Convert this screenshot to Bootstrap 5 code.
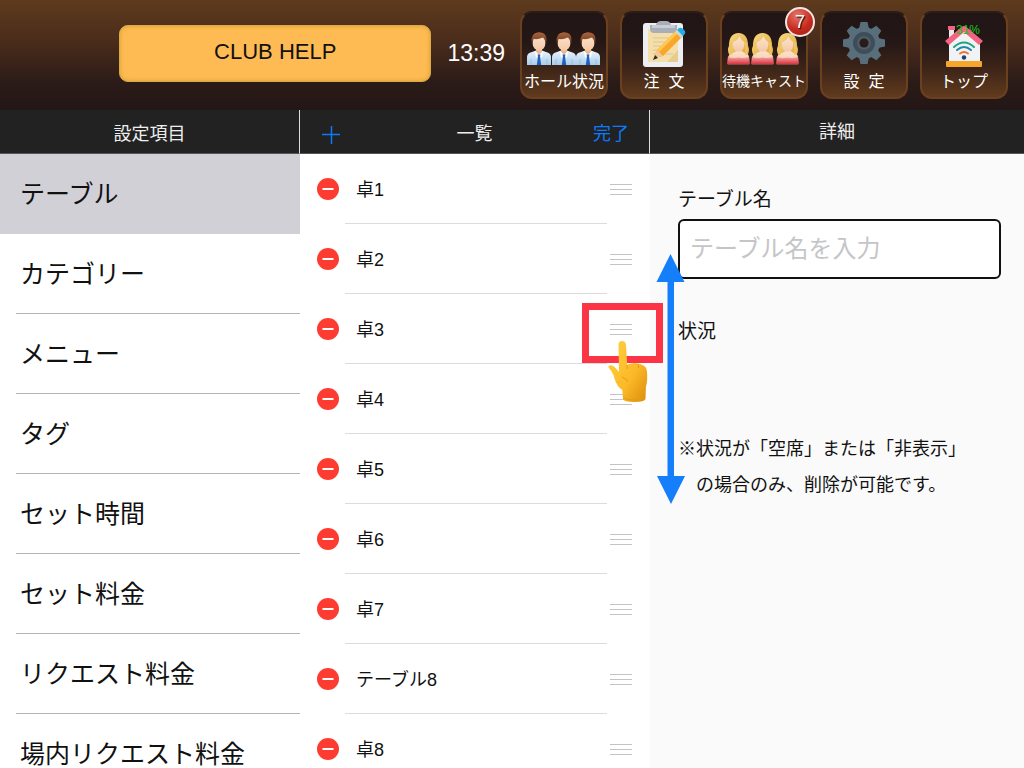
<!DOCTYPE html>
<html lang="ja">
<head>
<meta charset="utf-8">
<meta name="viewport" content="width=device-width, initial-scale=1">
<title>CLUB HELP</title>
<link rel="stylesheet" href="https://cdn.jsdelivr.net/npm/bootstrap@5.3.0/dist/css/bootstrap.min.css">
<style>
  body { font-family: "Liberation Sans", "Noto Sans CJK JP", sans-serif; color: #111; background: #fff; }
  .topbar { height: 110px; padding: 0 16px 0 119px; gap: 15px; background: linear-gradient(#5f3b1d 0%, #4a2c1b 38%, #2b1b18 75%, #231616 100%); }
  .topbar-main { gap: 16px; padding-bottom: 4px; }
  .club-btn { height: 57px; padding: 0 0 4px; font-size: 22px; background: #febb54; border: 1px solid #d9ab4c; border-radius: 9px; color: #111; box-shadow: inset 0 0 4px #d99f25; }
  .club-btn:hover { background: #ffc56b; }
  .clock { font-size: 23px; color: #fff; }
  .tiles { gap: 12px; }
  .tile { width: 88px; height: 88px; padding: 7px 0 0; border: 2px solid #6a401f; border-radius: 12px; background: linear-gradient(#211515 0%, #241716 35%, #3c2418 65%, #603a1d 100%); color: #fff; font-size: 16px; line-height: 24px; white-space: pre; border-top-color: #2e1c17; }
  .tile svg { display: block; height: 50px; }
  .tile-narrow { font-size: 14px; line-height: 22px; }
  .count-badge { top: -6px; right: -9px; width: 30px; height: 30px; border: 2px solid #f4e8e6; border-radius: 50%; background: radial-gradient(circle at 40% 25%, #e9776a, #c62b20 55%, #a41b13); font-size: 18px; line-height: 26px; text-shadow: 1px 1px 1px #000; }
  .battery { top: 11px; left: 0; width: 100%; padding-left: 8px; font-size: 12px; line-height: 12px; color: #17c51d; }
  .workspace { display: grid; grid-template-columns: 300fr 350fr 374fr; min-height: 0; }
  .pane { min-width: 0; min-height: 0; }
  .pane-head { height: 44px; flex: none; background: #222; color: #eee; font-size: 18px; line-height: 24px; border-bottom: 1px solid #555; }
  .pane-head-split { padding-top: 4px; border-right: 1px solid #ddd; }
  .list-head { display: grid; grid-template-columns: 1fr auto 1fr; }
  .pane-head h2 { font-size: 18px; line-height: 24px; font-weight: 400; margin: 0; }
  .plain-btn { border: 0; padding: 0; background: none; color: #0a7aff; line-height: 24px; }
  .scroller { overflow-y: auto; scrollbar-width: none; }
  .menu-item { display: block; flex: none; height: 80px; padding-left: 16px; color: #111; text-decoration: none; font-size: 25px; }
  .menu-item span { display: flex; align-items: center; height: 80px; padding: 2px 0 0 4px; border-bottom: 1px solid #b4b4b6; }
  .menu-item.current { background: #d1d0d7; }
  .menu-item.current span { border-color: transparent; }
  .table-row { height: 70px; flex: none; padding: 0 18px 0 17px; font-size: 18px; }
  .row-name { height: 70px; margin: 0 3px 0 6px; padding: 3px 0 0 11px; border-bottom: 1px solid #dcdcde; }
  .detail { background: #fafafa; }
  .detail-form { padding: 31px 23px 0 28px; }
  .field-label { display: block; font-size: 19px; line-height: 30px; margin: 0; }
  .name-input { height: 60px; margin: 4px 0 38px; padding: 0 10px; border: 2px solid #111; border-radius: 6px; font-size: 24px; background: #fff; }
  .name-input::placeholder { color: #c5c5c8; opacity: 1; }
  .note { margin: 84px 0 0; padding-left: 18px; text-indent: -18px; font-size: 18px; line-height: 36px; white-space: nowrap; }
  .note-rest { display: block; text-indent: 0; }
  .gesture { left: -70px; top: 140px; pointer-events: none; }
</style>
</head>
<body>
<svg width="0" height="0" class="position-absolute" aria-hidden="true">
  <defs>
    <linearGradient id="shirt" x1="0" y1="0" x2="0" y2="1"><stop offset="0" stop-color="#e9f5fc"/><stop offset="1" stop-color="#a9cdea"/></linearGradient>
    <linearGradient id="dress" x1="0" y1="0" x2="0" y2="1"><stop offset="0" stop-color="#f7a8a5"/><stop offset="1" stop-color="#d4323f"/></linearGradient>
    <linearGradient id="blonde" x1="0" y1="0" x2="1" y2="1"><stop offset="0" stop-color="#f8dc84"/><stop offset="1" stop-color="#dda63c"/></linearGradient>
    <linearGradient id="brown" x1="0" y1="0" x2="0" y2="1"><stop offset="0" stop-color="#a9643b"/><stop offset="1" stop-color="#6f3b21"/></linearGradient>
    <linearGradient id="skin" x1="0" y1="0" x2="0" y2="1"><stop offset="0" stop-color="#fce3cf"/><stop offset="1" stop-color="#f5c8a6"/></linearGradient>
    <linearGradient id="hand" x1="0" y1="0" x2="1" y2="1"><stop offset="0" stop-color="#ffd23e"/><stop offset=".6" stop-color="#fcb827"/><stop offset="1" stop-color="#d98c0b"/></linearGradient>
    <symbol id="staff" viewBox="0 0 24 33">
      <path d="M0 33v-8q0-4 5-5l4-1.500h6l4 1.500q5 1 5 5v8z" fill="url(#shirt)"/>
      <path d="M9 15h6v5l-3 3-3-3z" fill="#edb98f"/>
      <path d="M8 19l4 4-3 3zM16 19l-4 4 3 3z" fill="#fff"/>
      <path d="M10.500 22.500h3l-.5 2 1.200 8.500h-4.400l1.200-8.500z" fill="#2160bd"/>
      <path d="M4 27v6M20 27v6" stroke="#8fb5d6" stroke-width=".7"/>
      <ellipse cx="12" cy="10.500" rx="6.500" ry="8.300" fill="url(#skin)"/>
      <path d="M4.800 11Q3 1 11.500.2 21 0 19.200 11l-1-.2q-.3-4-2.200-5.400Q10 8 6.600 6.800q-.7 2-.6 4.200z" fill="url(#brown)"/>
    </symbol>
    <symbol id="hostess" viewBox="0 0 24 33">
      <path d="M3 24Q-.5 19 2 14 2 .5 12 .3 22 .5 22 14 24.500 19 21 24z" fill="url(#blonde)"/>
      <path d="M1 33v-7q1-4 6-5l3-2h5l3 2q5 1 5 5v7z" fill="url(#skin)"/>
      <path d="M0 33l1-8q5 2 11 1 6 1 11-1l1 8z" fill="url(#dress)"/>
      <path d="M5.800 10q5-1 7-6 2 4 5.300 6 .3 10-6.100 10T5.800 10z" fill="url(#skin)"/>
      <path d="M4.600 10q-2 7-.5 13M19.300 10q2 7 .5 13" fill="none" stroke="#efc564" stroke-width="2.400"/>
    </symbol>
  </defs>
</svg>

<div class="vh-100 d-flex flex-column overflow-hidden">
  <header class="topbar d-flex align-items-center flex-shrink-0">
    <div class="topbar-main d-flex align-items-center flex-fill">
      <button type="button" class="club-btn btn flex-fill">CLUB HELP</button>
      <time class="clock">13:39</time>
    </div>
    <nav class="tiles d-flex">
      <button type="button" class="tile d-flex flex-column align-items-center"><svg width="76" viewBox="0 0 76 50" aria-hidden="true"><use href="#staff" x="1" y="12" width="24" height="33"/><use href="#staff" x="26" y="12" width="24" height="33"/><use href="#staff" x="50" y="12" width="24" height="33"/></svg><span>ホール状況</span></button>
      <button type="button" class="tile d-flex flex-column align-items-center"><svg width="44" viewBox="0 0 44 50" aria-hidden="true">
          <rect x="1" y="3" width="40" height="44" rx="3" fill="#eceef1"/>
          <path d="M6 9h30v33H6z" fill="#f4dfaa"/><path d="M25 42l11-12v12z" fill="#e8cc8c"/>
          <path d="M11 18h17M11 22h15M11 26h12M11 30h9M11 34h7M23 34h8" stroke="#dbc795"/>
          <path d="M8 5h6q1-4 5-4h5q4 0 5 4h6v4q0 4-4 4H12q-4 0-4-4z" fill="#a9afb9"/><path d="M10 5h23v3H10z" fill="#c9ced6"/>
          <path d="M12 38l3-8 20-20 6 6-20 20z" fill="#f8a72b"/><path d="M15 30l20-20 2 2-20 20z" fill="#ffc84e"/>
          <path d="M12 38l3-8 6 6z" fill="#f1c9a0"/><path d="M11 40l2-5 3 3z" fill="#35292b"/>
          <path d="M35 10l2-2q2-1 4 1l2 2q1 2-1 4l-2 2z" fill="#22aee5"/><path d="M33 12l2-2 6 6-2 2z" fill="#cbd7dc"/>
        </svg><span>注  文</span></button>
      <button type="button" class="tile tile-narrow d-flex flex-column align-items-center position-relative"><svg width="76" viewBox="0 0 76 50" aria-hidden="true"><use href="#hostess" x="1" y="12" width="23" height="33"/><use href="#hostess" x="25" y="12" width="23" height="33"/><use href="#hostess" x="50" y="12" width="23" height="33"/></svg><span>待機キャスト</span><span class="count-badge position-absolute">7</span></button>
      <button type="button" class="tile d-flex flex-column align-items-center"><svg width="44" viewBox="-22 -23 44 50" aria-hidden="true">
          <g fill="#586e7b"><circle r="16"/>
            <path id="tooth" d="M-5-14l1.500-7h7L5-14zM-5 14l1.500 7h7L5 14z"/>
            <use href="#tooth" transform="rotate(45)"/><use href="#tooth" transform="rotate(90)"/><use href="#tooth" transform="rotate(135)"/></g>
          <circle r="11" fill="#3e4d57"/><circle r="7" fill="#4b5d68"/><circle r="4.500" fill="#2a1a18"/>
        </svg><span>設  定</span></button>
      <button type="button" class="tile d-flex flex-column align-items-center position-relative"><svg width="40" viewBox="0 0 40 50" aria-hidden="true">
          <path d="M5 8h5v14H5z" fill="#e7e9ec"/><path d="M4 6h7v4H4z" fill="#f2647f"/>
          <path d="M20 9L5 22v22h31V22z" fill="#f1f2f5"/>
          <path d="M17.500 7q2.500-2 5 0L39 21l-4 4-15-13L5 25l-4-4z" fill="#f2647f"/>
          <rect x="2" y="41" width="36" height="6" rx="1" fill="#f7a62b"/>
          <g fill="none" stroke-width="2" stroke-linecap="round"><path d="M10 27q10-9 20 0" stroke="#1ba67e"/><path d="M13 30q7-6 14 0" stroke="#2187a8"/><path d="M16 33.500q4-3 8 0" stroke="#f26f30"/></g>
          <circle cx="20" cy="37.500" r="2.200" fill="#17456f"/>
        </svg><span>トップ</span><span class="battery position-absolute">31%</span></button>
    </nav>
  </header>

  <main class="workspace flex-grow-1">
    <section class="pane d-flex flex-column">
      <div class="pane-head pane-head-split d-flex align-items-center justify-content-center"><h2>設定項目</h2></div>
      <nav class="scroller d-flex flex-column">
        <a href="#" class="menu-item current" aria-current="page"><span>テーブル</span></a>
        <a href="#" class="menu-item"><span>カテゴリー</span></a>
        <a href="#" class="menu-item"><span>メニュー</span></a>
        <a href="#" class="menu-item"><span>タグ</span></a>
        <a href="#" class="menu-item"><span>セット時間</span></a>
        <a href="#" class="menu-item"><span>セット料金</span></a>
        <a href="#" class="menu-item"><span>リクエスト料金</span></a>
        <a href="#" class="menu-item"><span>場内リクエスト料金</span></a>
      </nav>
    </section>

    <section class="pane d-flex flex-column">
      <div class="pane-head pane-head-split list-head align-items-center px-3">
        <button type="button" class="plain-btn d-flex px-1" aria-label="追加"><svg width="22" height="24" viewBox="0 0 22 24"><path d="M2 12.500h18M11.500 4v18" stroke="#0a7aff" stroke-width="1.500"/></svg></button>
        <h2>一覧</h2>
        <button type="button" class="plain-btn px-1 justify-self-end text-end">完了</button>
      </div>
      <ul class="scroller list-unstyled mb-0 d-flex flex-column" id="tables"></ul>
    </section>

    <section class="pane detail position-relative">
      <div class="pane-head d-flex align-items-center justify-content-center"><h2>詳細</h2></div>
      <form class="detail-form">
        <label class="field-label" for="table-name">テーブル名</label>
        <input type="text" id="table-name" class="name-input d-block w-100" placeholder="テーブル名を入力">
        <p class="field-label">状況</p>
        <p class="note">※状況が「空席」または「非表示」<span class="note-rest">の場合のみ、削除が可能です。</span></p>
      </form>
      <svg class="gesture position-absolute" width="108" height="256" viewBox="0 0 108 256" aria-hidden="true">
        <path d="M90.500 4l14 28H94v194h11l-14 28-14-28h10.500V32H76.500z" fill="#147efb"/>
        <rect x="5.500" y="56.500" width="74" height="53" fill="none" stroke="#fc3546" stroke-width="7"/>
        <path d="M38.500 95q0-4 3.500-4t4 4l1.200 20q2-2 5-1.500 2-1 5 0 3-.5 5 1.500 4 1 4.700 6 1 9-1 16l-.4 12q-1 3-11 3-11 0-11.500-3l-.7-9q-5-3-7.300-10-1.500-6-4-9.500-3-3-2.500-4.500 3-2 6 1 2 2 4.500 5z" fill="url(#hand)"/>
        <path d="M47.200 115v4M57.500 114q1.500 2 1 4M42 127q4 1 6 5M43 148q9 4 22 0" fill="none" stroke="#e29c18" stroke-width="1"/>
      </svg>
    </section>
  </main>
</div>

<script>
  // One row per table: delete button, name, drag handle.
  const names = ['卓1', '卓2', '卓3', '卓4', '卓5', '卓6', '卓7', 'テーブル8', '卓8'];
  document.getElementById('tables').innerHTML = names.map(name => `
    <li class="table-row d-flex align-items-center">
      <button type="button" class="plain-btn flex-shrink-0" aria-label="${name}を削除"><svg class="d-block" width="22" height="22" viewBox="0 0 22 22"><circle cx="11" cy="11" r="11" fill="#fe3b30"/><path d="M5.500 11h11" stroke="#fff" stroke-width="2"/></svg></button>
      <span class="row-name d-flex align-items-center flex-grow-1">${name}</span>
      <svg class="flex-shrink-0" width="22" height="12" viewBox="0 0 22 12"><path d="M0 1.500h22M0 6.500h22M0 11.500h22" stroke="#c4c4c7"/></svg>
    </li>`).join('');
</script>
<script src="https://cdn.jsdelivr.net/npm/bootstrap@5.3.0/dist/js/bootstrap.bundle.min.js"></script>
</body>
</html>
